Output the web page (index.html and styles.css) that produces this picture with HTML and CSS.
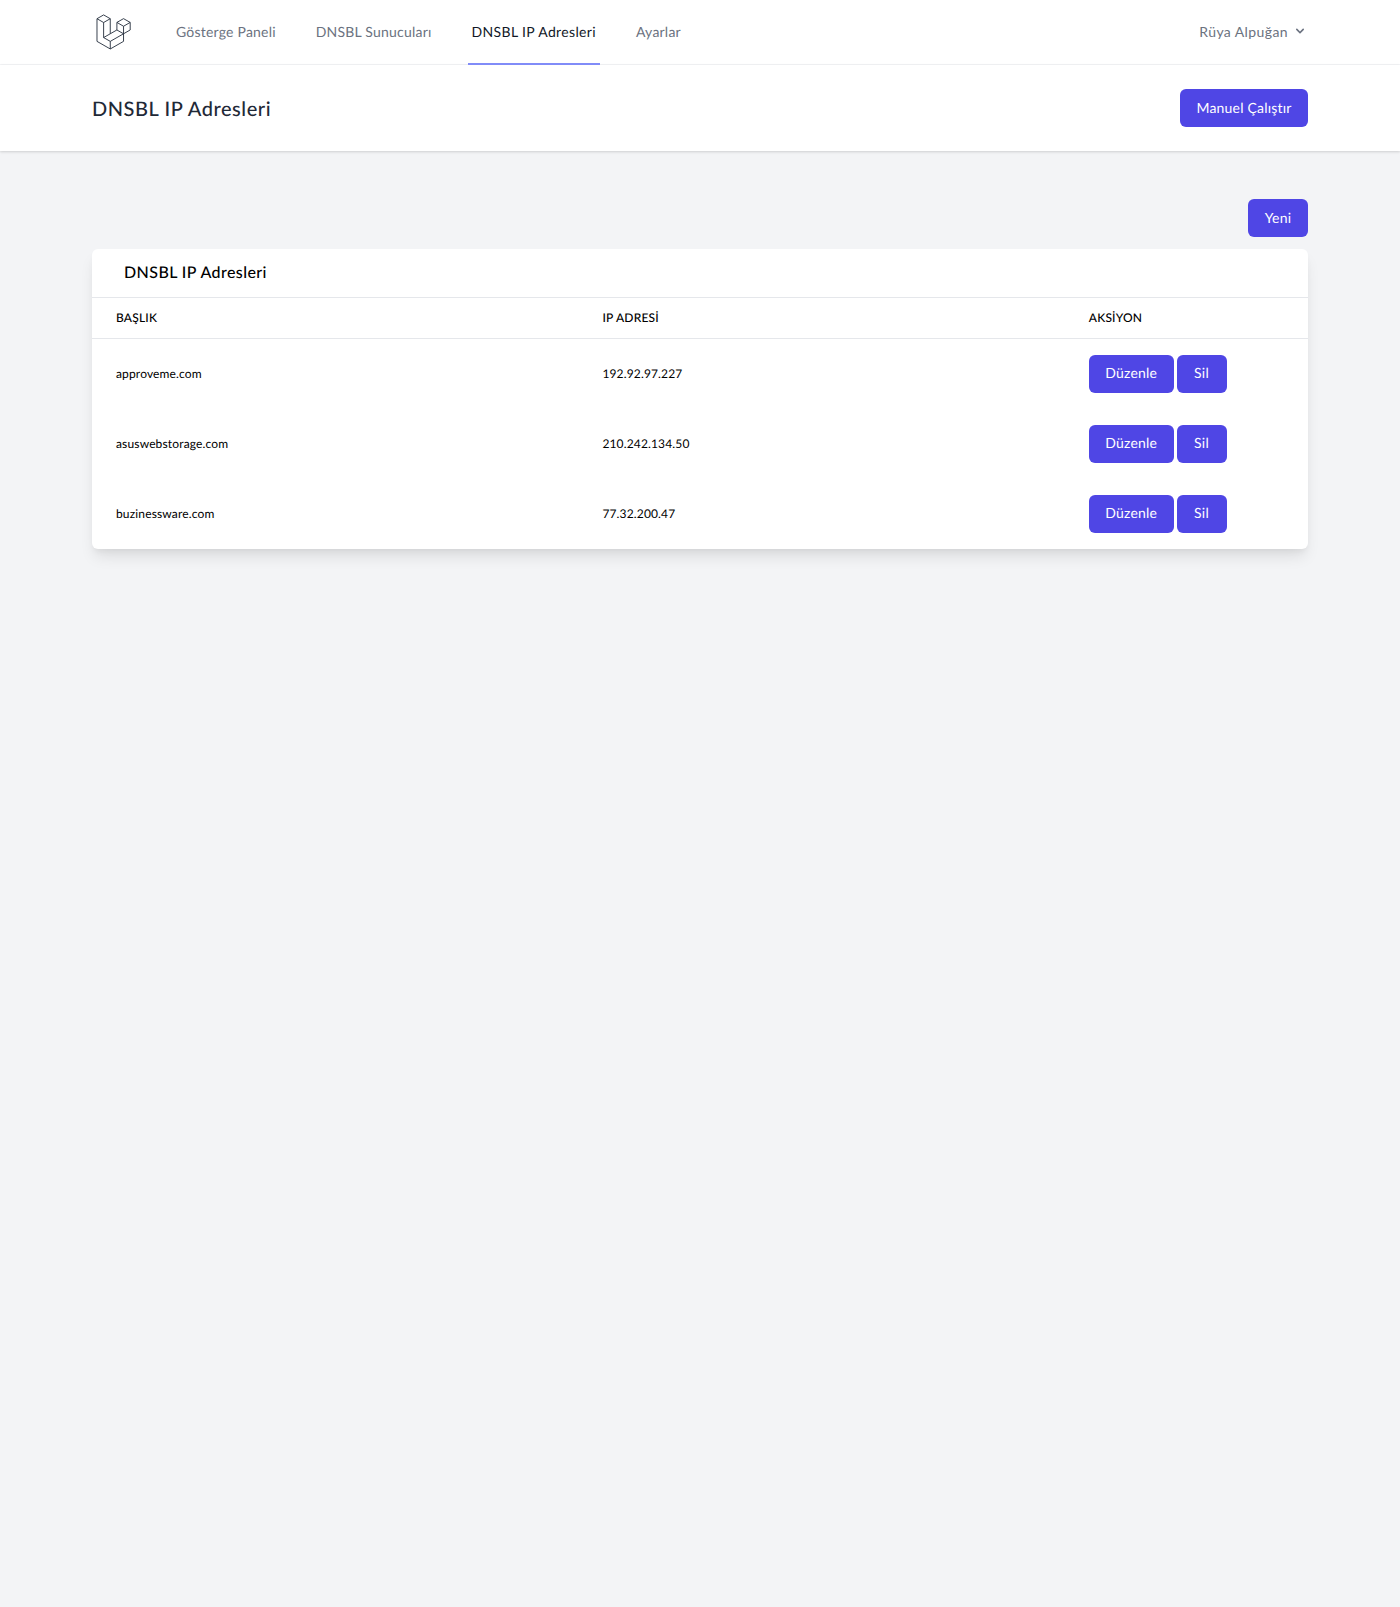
FILE: index.html
```html
<!DOCTYPE html>
<html lang="tr">
<head>
<meta charset="utf-8">
<title>DNSBL IP Adresleri</title>
<link rel="stylesheet" href="styles.css">
</head>
<body>
<nav class="topnav">
  <div class="container topnav-inner">
    <div class="nav-left">
      <a class="logo" href="#" aria-label="Laravel">
        <svg viewBox="0 0 316 316" width="40" height="40" fill="none" stroke="currentColor" stroke-width="7" stroke-linejoin="round">
          <path d="M91.8 23 39.4 53 91.8 83 144.2 53Z"/>
          <path d="M39.4 53V232L144.3 292 249.2 232V172"/>
          <path d="M91.8 83V202L144.3 232 249.2 172"/>
          <path d="M144.2 53V172L91.8 202"/>
          <path d="M144.2 172 196.7 142 249.2 172"/>
          <path d="M144.3 232V292"/>
          <path d="M249.1 52.5 196.7 82.3 249.1 112.5 301.7 82.3Z"/>
          <path d="M196.7 82.3V142M249.1 112.5V172L301.7 142V82.3"/>
        </svg>
      </a>
      <div class="nav-links">
        <a class="nav-link" href="#">Gösterge Paneli</a>
        <a class="nav-link" href="#">DNSBL Sunucuları</a>
        <a class="nav-link active" href="#">DNSBL IP Adresleri</a>
        <a class="nav-link" href="#">Ayarlar</a>
      </div>
    </div>
    <button class="user-menu" type="button">
      <span>Rüya Alpuğan</span>
      <svg viewBox="0 0 20 20" width="16" height="16" fill="currentColor"><path fill-rule="evenodd" clip-rule="evenodd" d="M5.293 7.293a1 1 0 011.414 0L10 10.586l3.293-3.293a1 1 0 111.414 1.414l-4 4a1 1 0 01-1.414 0l-4-4a1 1 0 010-1.414z"/></svg>
    </button>
  </div>
</nav>
<header class="page-header">
  <div class="container page-header-inner">
    <h2 class="page-title">DNSBL IP Adresleri</h2>
    <a class="btn btn-run" href="#">Manuel Çalıştır</a>
  </div>
</header>
<main class="container main">
  <div class="toolbar"><a class="btn btn-new" href="#">Yeni</a></div>
  <section class="card">
    <h3 class="card-title">DNSBL IP Adresleri</h3>
    <table class="table">
      <thead>
        <tr><th class="col-wide">Başlık</th><th class="col-wide">IP Adresi</th><th>Aksiyon</th></tr>
      </thead>
      <tbody>
        <tr><td>approveme.com</td><td>192.92.97.227</td><td class="actions"><a class="btn btn-edit" href="#">Düzenle</a> <a class="btn btn-del" href="#">Sil</a></td></tr>
        <tr><td>asuswebstorage.com</td><td>210.242.134.50</td><td class="actions"><a class="btn btn-edit" href="#">Düzenle</a> <a class="btn btn-del" href="#">Sil</a></td></tr>
        <tr><td>buzinessware.com</td><td>77.32.200.47</td><td class="actions"><a class="btn btn-edit" href="#">Düzenle</a> <a class="btn btn-del" href="#">Sil</a></td></tr>
      </tbody>
    </table>
  </section>
</main>
</body>
</html>
```
FILE: styles.css
```css
* { box-sizing: border-box; }
html, body { margin: 0; padding: 0; }
body {
  min-height: 1607px;
  background: #f3f4f6;
  font-family: Lato, "Noto Sans", sans-serif;
  font-size: 16px;
  color: #000;
  text-rendering: geometricPrecision;
}
a { text-decoration: none; color: inherit; }
.container { width: 1280px; margin: 0 auto; padding: 0 32px; }

.topnav { background: #fff; border-bottom: 1px solid #f3f4f6; height: 65px; }
.topnav-inner { display: flex; justify-content: space-between; height: 65px; }
.nav-left { display: flex; }
.logo { display: flex; align-items: center; height: 64px; color: #1f2937; width: 80px; }
.nav-links { display: flex; gap: 32px; }
.nav-link {
  display: flex; align-items: center;
  padding: 0 4px;
  border-bottom: 2px solid transparent;
  font-size: 14px; line-height: 20px; color: #6b7280;
  letter-spacing: .21px;
}
.nav-link.active { color: #111827; border-bottom-color: #818cf8; letter-spacing: .36px; }
.user-menu {
  display: flex; align-items: center; gap: 4px;
  height: 64px;
  padding: 0 0 2px; border: 0; background: none;
  font: inherit; font-size: 14px; color: #6b7280;
  letter-spacing: .4px;
}

.page-header { background: #fff; box-shadow: 0 1px 3px rgba(0,0,0,.1), 0 1px 2px rgba(0,0,0,.06); }
.page-header-inner { display: flex; justify-content: space-between; align-items: center; padding-top: 24px; padding-bottom: 24px; }
.page-title { margin: 0; padding-top: 2px; font-size: 20px; line-height: 28px; font-weight: 500; color: #1f2937; letter-spacing: .55px; }

.btn {
  display: inline-flex; align-items: center; justify-content: center;
  height: 38px; padding: 0 0 1px;
  background: #4f46e5; color: #fff;
  border-radius: 6px;
  font-size: 14px; line-height: 20px;
  letter-spacing: .2px;
}
.btn-run { width: 128px; }
.btn-new { width: 60px; }
.btn-edit { width: 85px; }
.btn-del { width: 50px; }

.main { padding-top: 48px; padding-bottom: 48px; }
.toolbar { display: flex; justify-content: flex-end; margin-bottom: 12px; }
.card { background: #fff; border-radius: 6px; overflow: hidden; box-shadow: 0 10px 15px -3px rgba(0,0,0,.1), 0 4px 6px -2px rgba(0,0,0,.05); }
.card-title { margin: 0; height: 48px; padding: 0 32px; font-size: 16px; line-height: 48px; font-weight: 500; color: #000; letter-spacing: .42px; }
.table { width: 100%; border-collapse: collapse; table-layout: fixed; font-size: 12px; letter-spacing: .15px; }
.table th {
  height: 41px; padding: 0 24px 2px; text-align: left;
  border-top: 1px solid #e5e7eb; border-bottom: 1px solid #e5e7eb;
  font-weight: 500; text-transform: uppercase;
  letter-spacing: .2px;
}
.col-wide { width: 40%; }
.table td { height: 70px; padding: 0 24px; }
.actions { white-space: nowrap; font-size: 14px; word-spacing: -1px; }
```
